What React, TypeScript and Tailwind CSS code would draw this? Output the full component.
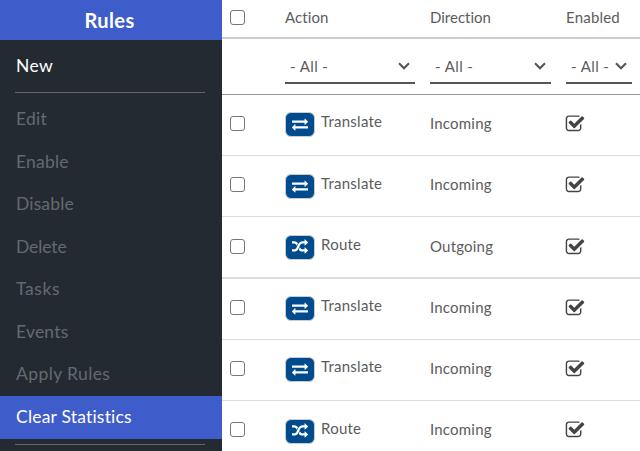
import React from "react";

const EXCHANGE =
  "M1792 1184v192q0 13-9.5 22.5t-22.5 9.5h-1376v192q0 13-9.5 22.5t-22.5 9.5q-12 0-24-10l-319-320q-9-9-9-22 0-14 9-23l320-320q9-9 23-9 13 0 22.5 9.5t9.5 22.5v192h1376q13 0 22.5 9.5t9.5 22.5zm0-544q0 14-9 23l-320 320q-9 9-23 9-13 0-22.5-9.5t-9.5-22.5v-192h-1376q-13 0-22.5-9.5t-9.5-22.5v-192q0-13 9.5-22.5t22.5-9.5h1376v-192q0-14 9-23t23-9q12 0 24 10l319 319q9 9 9 23z";
const SHUFFLE =
  "M666 481q-60 92-137 273-22-45-37-72.5t-40.5-63.5-51-56.5-63-35-81.5-14.5h-224q-14 0-23-9t-9-23v-192q0-14 9-23t23-9h224q250 0 410 225zm1126 799q0 14-9 23l-320 320q-9 9-23 9-13 0-22.5-9.5t-9.5-22.5v-192q-32 0-85 .5t-81 1-73-1-71-5-64-10.5-63-18.5-58-28.5-59-40-55-53.5-56-69.5q59-93 136-273 22 45 37 72.5t40.5 63.5 51 56.5 63 35 81.5 14.5h256v-192q0-14 9-23t23-9q12 0 24 10l319 319q9 9 9 23zm0-896q0 14-9 23l-320 320q-9 9-23 9-13 0-22.5-9.5t-9.5-22.5v-192h-256q-48 0-87 15t-69 45-51 61.5-45 77.5q-32 62-78 171-29 66-49.5 111t-54 105-64 100-74 83-90 68.5-106.5 42-128 16.5h-224q-14 0-23-9t-9-23v-192q0-14 9-23t23-9h224q48 0 87-15t69-45 51-61.5 45-77.5q32-62 78-171 29-66 49.5-111t54-105 64-100 74-83 90-68.5 106.5-42 128-16.5h256v-192q0-14 9-23t23-9q12 0 24 10l319 319q9 9 9 23z";
const CHECK =
  "M1472 930v318q0 119-84.5 203.5t-203.5 84.5h-832q-119 0-203.5-84.5t-84.5-203.5v-832q0-119 84.5-203.5t203.5-84.5h832q63 0 117 25 15 7 18 23 3 17-9 29l-49 49q-10 10-23 10-3 0-9-2-23-6-45-6h-832q-66 0-113 47t-47 113v832q0 66 47 113t113 47h832q66 0 113-47t47-113v-254q0-13 9-22l64-64q10-10 23-10 6 0 12 3 20 8 20 29zm231-489l-814 814q-24 24-57 24t-57-24l-430-430q-24-24-24-57t24-57l110-110q24-24 57-24t57 24l263 263 647-647q24-24 57-24t57 24l110 110q24 24 24 57t-24 57z";

const GRID = "grid grid-cols-[63px_145px_136px_74px]";

const MENU = [
  { label: "Edit", cls: "h-[43px] tracking-[0.25px]" },
  { label: "Enable", cls: "h-[42px] pt-[2px] tracking-[0.2px]" },
  { label: "Disable", cls: "h-[43px] tracking-[0.15px]" },
  { label: "Delete", cls: "h-[42px] pt-[2px] tracking-[-0.1px]" },
  { label: "Tasks", cls: "h-[43px] tracking-[0.6px]" },
  { label: "Events", cls: "h-[42px] pt-[2px] tracking-[0.2px]" },
  { label: "Apply Rules", cls: "h-[43px] tracking-[0.4px]" },
];

const ROWS = [
  { action: "Translate", direction: "Incoming", cls: "h-[61px] border-b border-[#dcdcdc]", box: "mt-[21px]", badge: "mt-[17px]" },
  { action: "Translate", direction: "Incoming", cls: "h-[61px] border-b border-[#dcdcdc]", box: "mt-[21px]", badge: "mt-[18px]" },
  { action: "Route", direction: "Outgoing", cls: "h-[62px] border-b-2 border-[#dcdcdc]", box: "mt-[22px]", badge: "mt-[18px]" },
  { action: "Translate", direction: "Incoming", cls: "h-[61px] border-b border-[#dcdcdc]", box: "mt-[21px]", badge: "mt-[17px]" },
  { action: "Translate", direction: "Incoming", cls: "h-[61px] border-b border-[#dcdcdc]", box: "mt-[21px]", badge: "mt-[17px]" },
  { action: "Route", direction: "Incoming", cls: "h-[61px]", box: "mt-[21px]", badge: "mt-[18px]" },
];

function Checkbox() {
  return (
    <span
      role="checkbox"
      aria-checked="false"
      className="block size-[15px] rounded-[3px] border border-[#767676] bg-white"
    />
  );
}

function Select({ cls }: { cls: string }) {
  return (
    <div className={`flex h-[35px] items-center justify-between border-b-2 border-[#555] pl-[5px] pr-[5px] ${cls}`}>
      <span className="tracking-[0.4px]">- All -</span>
      <svg className="h-[8px] w-[12px]" viewBox="0 0 12 8" fill="none" stroke="#555" strokeWidth="2.1">
        <path d="M1 1.2 6 6.2 11 1.2" />
      </svg>
    </div>
  );
}

export default function App() {
  return (
    <div className="flex h-[451px] w-[640px] overflow-hidden bg-white font-[Lato,'Noto_Sans',sans-serif] text-[15px] leading-[20px] text-[#5c5c5c] [font-variant-ligatures:none]">
      <aside className="flex w-[222px] shrink-0 flex-col bg-[#232a31] text-[17.5px]">
        <h1 className="flex h-[40px] shrink-0 items-center justify-center bg-[#3f5ccb] pb-px pr-[3px] text-[20px] font-bold tracking-[0.4px] text-white">
          Rules
        </h1>
        <div className="flex h-[52px] shrink-0 items-center pl-4 tracking-[0.4px] text-white">New</div>
        <hr className="ml-[15px] mr-[17px] border-[#666]" />
        <nav className="flex flex-col pt-[4px] text-[#646a70]">
          {MENU.map((m) => (
            <div key={m.label} className={`flex shrink-0 items-center pl-4 ${m.cls}`}>
              {m.label}
            </div>
          ))}
        </nav>
        <div className="mt-px flex h-[43px] shrink-0 items-center bg-[#3f5ccb] pb-px pl-4 tracking-[0.2px] text-white">
          Clear Statistics
        </div>
        <hr className="ml-[15px] mr-[17px] mt-[5px] border-[#666]" />
      </aside>

      <main className="w-[418px] shrink-0">
        <div className={`${GRID} h-[39px] border-b-2 border-[#ccc]`}>
          <div className="pl-2 pt-[10px]"><Checkbox /></div>
          <div className="pt-[7px] tracking-[0.1px]">Action</div>
          <div className="pt-[7px]">Direction</div>
          <div className="pt-[7px] tracking-[0.2px]">Enabled</div>
        </div>
        <div className={`${GRID} h-[56px] border-b border-[#999] pt-[10px]`}>
          <div />
          <Select cls="w-[130px]" />
          <Select cls="w-[121px]" />
          <Select cls="w-[66px]" />
        </div>
        {ROWS.map((r, i) => (
          <div key={i} className={`${GRID} ${r.cls}`}>
            <div className="pl-2"><div className={r.box}><Checkbox /></div></div>
            <div className={`flex items-start gap-[6px] ${r.badge}`}>
              <span className="flex h-[25px] w-[30px] items-center justify-center rounded-[6px] border border-[#ccc] bg-[#004b8d] pb-px">
                <svg className="size-4" viewBox="0 0 1792 1792" fill="#fff">
                  <path d={r.action === "Route" ? SHUFFLE : EXCHANGE} />
                </svg>
              </span>
              <span className="-mt-px tracking-[0.25px]">{r.action}</span>
            </div>
            <div className={r.box}><div className="-mt-[3px] tracking-[0.2px]">{r.direction}</div></div>
            <div className={r.box}>
              <svg className="-ml-px -mt-[2px] size-5" viewBox="0 0 1792 1792" fill="#444">
                <path d={CHECK} />
              </svg>
            </div>
          </div>
        ))}
      </main>
    </div>
  );
}
